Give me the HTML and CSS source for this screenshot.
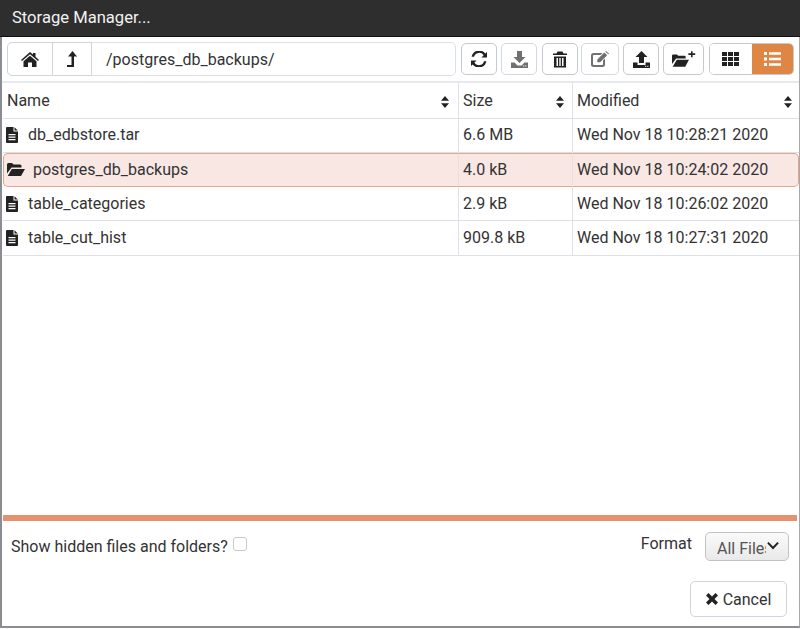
FILE: index.html
```html
<!DOCTYPE html>
<html lang="en">
<head>
    <meta charset="UTF-8">
    <title>Storage Manager</title>
    <link rel="stylesheet" href="styles.css">
</head>
<body>
    <svg class="defs" width="0" height="0">
        <symbol id="file" viewBox="0 0 12 16"><path d="M1 0h6.500v4.500H12V15a1 1 0 0 1-1 1H1a1 1 0 0 1-1-1V1a1 1 0 0 1 1-1zM8.500 0.200 11.800 3.500H8.500zM2.500 7v1.300h7V7zM2.500 9.500v1.300h7V9.500zM2.500 12v1.300h7V12z" fill-rule="evenodd"/></symbol>
        <symbol id="sort" viewBox="0 0 8 12"><path d="M4 0 8 4.700H0zM4 12 0 7.300H8z"/></symbol>
    </svg>

    <div class="dialog">
        <div class="title">Storage Manager...</div>

        <div class="toolbar">
            <div class="path-box">
                <button class="tool home">
                    <svg width="18" height="15" viewBox="0 0 18 15"><path d="M9 0 12 2.600V1h2.500v3.800L18 7.900 17 9 9 2.200 1 9 0 7.900zM9 3.800 15.500 9.300V15H11V10.500H7V15H2.500V9.300z"/></svg>
                </button>
                <button class="tool up">
                    <svg width="10" height="16" viewBox="0 0 10 16"><path d="M5.500 0 10 5.500H7V16H0V14H4.500V5.500H1z"/></svg>
                </button>
                <span class="path-text">/postgres_db_backups/</span>
            </div>

            <button class="tool btn-refresh">
                <svg width="16" height="16" viewBox="0 0 16 16"><path d="M16 1v5.500h-5.500L12.600 4.300A5.300 5.300 0 0 0 3 5.800H.6A7.700 7.700 0 0 1 14.300 2.600zM0 15V9.500h5.500L3.400 11.700A5.300 5.300 0 0 0 13 10.200h2.400A7.700 7.700 0 0 1 1.700 13.400z"/></svg>
            </button>
            <button class="tool btn-download">
                <svg class="muted" width="17" height="17" viewBox="0 0 17 17"><path d="M6 0h5v6h3.500L8.500 12 2.500 6H6zM0 11.500h3.500L6.500 14.500h4L13.500 11.500H17V17H0zM12 14.500h1.200v1H12zM14.200 14.500h1.200v1h-1.200z" fill-rule="evenodd"/></svg>
            </button>
            <button class="tool btn-delete">
                <svg width="14" height="17" viewBox="0 0 14 16"><path d="M4.500 0h5L10.500 2H14V3.500H0V2H3.500zM1 5h12V16H1zM3.500 6.500V14.500H5V6.500zM6.300 6.500V14.500H7.700V6.500zM9 6.500V14.500H10.500V6.500z" fill-rule="evenodd"/></svg>
            </button>
            <button class="tool btn-edit">
                <svg class="muted" width="18" height="16" viewBox="0 0 18 16"><path d="M2.500 2H11.500L9.500 4H2.800A.8.8 0 0 0 2 4.800V13.200A.8.8 0 0 0 2.800 14H11.200A.8.8 0 0 0 12 13.200V9.500L14 7.500V13.500A2.500 2.500 0 0 1 11.500 16H2.500A2.500 2.500 0 0 1 0 13.500V4.500A2.500 2.500 0 0 1 2.500 2zM13.300 1.500 16.200 4.300 9.200 11.300H6.300V8.500zM14.300.5 15 0 18 2.500 17.200 3.300z"/></svg>
            </button>
            <button class="tool btn-upload">
                <svg width="17" height="17" viewBox="0 0 17 17"><path d="M8.500 0 14.500 6H11V12H6V6H2.500zM0 11.500H4.500V14H12.500V11.500H17V17H0zM12 14.800h1.200v1H12zM14.200 14.800h1.200v1h-1.200z" fill-rule="evenodd"/></svg>
            </button>
            <button class="tool btn-folder">
                <svg width="24" height="16" viewBox="0 0 29 19"><path d="M0 5.500A1.500 1.500 0 0 1 1.500 4H6L7.500 5.500H15A1.500 1.500 0 0 1 16.500 7V9H5L0 15.500zM5.800 10.500H20.500L16 19H0.800z"/><path d="M23 0h1.900v2.700H28V4.600H24.900V7.500H23V4.600H19.800V2.700H23z"/></svg>
            </button>

            <div class="view-group">
                <button class="view-btn">
                    <svg width="17" height="14" viewBox="0 0 17 14"><path d="M0 0h5v4H0zM6 0h5v4H6zM12 0h5v4h-5zM0 5h5v4H0zM6 5h5v4H6zM12 5h5v4h-5zM0 10h5v4H0zM6 10h5v4H6zM12 10h5v4h-5z"/></svg>
                </button>
                <button class="view-btn active">
                    <svg width="17" height="14" viewBox="0 0 17 14"><path d="M0 0h3v3H0zM5 .3h12v2.400H5zM0 5.500h3v3H0zM5 5.800h12v2.400H5zM0 11h3v3H0zM5 11.300h12v2.400H5z"/></svg>
                </button>
            </div>
        </div>

        <div class="file-area">
            <table class="files">
                <colgroup>
                    <col class="col-name">
                    <col class="col-size">
                    <col>
                </colgroup>
                <thead>
                    <tr>
                        <th>Name<svg class="sort sort-name"><use href="#sort"/></svg></th>
                        <th>Size<svg class="sort sort-size"><use href="#sort"/></svg></th>
                        <th>Modified<svg class="sort"><use href="#sort"/></svg></th>
                    </tr>
                </thead>
                <tbody>
                    <tr class="raised">
                        <td><svg class="file-icon"><use href="#file"/></svg><span class="fname">db_edbstore.tar</span></td>
                        <td>6.6 MB</td>
                        <td>Wed Nov 18 10:28:21 2020</td>
                    </tr>
                    <tr class="selected raised">
                        <td><svg class="folder-icon" viewBox="0 0 18 13"><path d="M0 1.500A1.500 1.500 0 0 1 1.500 0H5L6.500 1.500H13A1.500 1.500 0 0 1 14.500 3V4.500H4.500L0 10.500zM4.800 6H18L14 13H.8z"/></svg><span class="fname">postgres_db_backups</span></td>
                        <td>4.0 kB</td>
                        <td>Wed Nov 18 10:24:02 2020</td>
                    </tr>
                    <tr>
                        <td><svg class="file-icon"><use href="#file"/></svg><span class="fname">table_categories</span></td>
                        <td>2.9 kB</td>
                        <td>Wed Nov 18 10:26:02 2020</td>
                    </tr>
                    <tr class="last-row">
                        <td><svg class="file-icon"><use href="#file"/></svg><span class="fname">table_cut_hist</span></td>
                        <td>909.8 kB</td>
                        <td>Wed Nov 18 10:27:31 2020</td>
                    </tr>
                </tbody>
            </table>
        </div>

        <div class="splitter"></div>

        <div class="options">
            <div class="hidden-opt">Show hidden files and folders?<span class="check"></span></div>
            <div class="format">
                <span class="format-label">Format</span>
                <div class="select"><span class="select-text">All Files</span>
                    <svg class="chevron" width="12" height="8" viewBox="0 0 13 9"><path d="M1.500 0 6.500 5 11.500 0 13 1.500 6.500 8.500 0 1.500z"/></svg>
                </div>
            </div>
        </div>

        <div class="footer">
            <button class="cancel">
                <svg width="12" height="12" viewBox="0 0 12 12"><path d="M2.500 0 6 3.500 9.500 0 12 2.500 8.500 6 12 9.500 9.500 12 6 8.500 2.500 12 0 9.500 3.500 6 0 2.500z"/></svg>Cancel
            </button>
        </div>
    </div>
</body>
</html>
```

FILE: styles.css
```css
* {
    box-sizing: border-box;
}
html, body {
    margin: 0;
    height: 100%;
    background-color: #fff;
}
body {
    font-family: Roboto, 'Liberation Sans', sans-serif;
    font-size: 16px;
    color: #333;
    overflow: hidden;
}
.defs {
    position: absolute;
}
svg {
    fill: #222;
    display: block;
}
button {
    font-family: inherit;
    font-size: inherit;
    color: inherit;
    margin: 0;
    padding: 0;
}
.dialog {
    height: 628px;
    display: flex;
    flex-direction: column;
    border-left: 2px solid #8a8d92;
    border-bottom: 2px solid #8a8d92;
    border-right: 1px solid #a5a8ad;
}
.title {
    height: 37px;
    margin-left: -2px;
    margin-right: -1px;
    padding: 0 12px;
    background-color: #2f2e2e;
    border-bottom: 1px solid #111;
    color: #f2f2f2;
    font-size: 16.6px;
    line-height: 36px;
}
.toolbar {
    height: 46px;
    padding: 5px 5px 0 5px;
    display: flex;
    align-items: flex-start;
    border-bottom: 2px solid #e6e9ef;
}
.path-box {
    width: 449px;
    height: 34px;
    display: flex;
    align-items: center;
    border: 1px solid #dde0e7;
    border-radius: 5px;
    margin-right: 5px;
}
.tool {
    height: 32px;
    display: flex;
    align-items: center;
    justify-content: center;
    background-color: #fff;
    border: 1px solid #c5c9d1;
    border-radius: 5px;
    margin-top: 1px;
    margin-right: 4px;
    flex: none;
}
.path-box .tool {
    height: 34px;
    margin: -1px 0;
    border-color: #d0d4db;
}
.tool.home {
    width: 46px;
    margin-left: -1px;
    border-radius: 5px 0 0 5px;
}
.tool.up {
    width: 40px;
    margin-left: -1px;
    border-radius: 0;
}
.path-text {
    margin-left: 14px;
}
.btn-refresh, .btn-download, .btn-delete, .btn-upload {
    width: 36px;
}
.btn-download {
    margin-right: 5px;
}
.btn-delete {
    margin-right: 3px;
}
.btn-edit {
    width: 38px;
}
.btn-folder {
    width: 41px;
    margin-right: 5px;
}
.btn-download, .btn-edit {
    border-color: #d5d8de;
}
svg.muted {
    fill: #707070;
}
.view-group {
    margin-top: 1px;
    display: flex;
    height: 32px;
    width: 85px;
    border: 1px solid #c5c9d1;
    border-radius: 5px;
    overflow: hidden;
}
.view-btn {
    flex: 1;
    display: flex;
    align-items: center;
    justify-content: center;
    border: none;
    background-color: #fff;
}
.view-btn.active {
    background-color: #e08645;
}
.view-btn.active svg {
    fill: #fff;
}
.file-area {
    flex: 1;
    margin-left: 1px;
}
.files {
    width: 100%;
    table-layout: fixed;
    border-collapse: separate;
    border-spacing: 0;
}
.col-name {
    width: 455px;
}
.col-size {
    width: 114px;
}
.files th, .files td {
    height: 34px;
    padding: 0 4px;
    font-weight: 400;
    text-align: left;
    border-bottom: 1px solid #dde0e7;
    border-left: 1px solid #dde0e7;
    white-space: nowrap;
}
.files th:first-child, .files td:first-child {
    border-left: none;
}
.files th {
    height: 36px;
    position: relative;
    padding-bottom: 1px;
}
.files td:first-child {
    display: flex;
    align-items: center;
}
.files .raised td {
    padding-bottom: 2px;
}
.last-row td {
    height: 35px;
    padding-bottom: 1px;
}
.sort {
    position: absolute;
    right: 7px;
    top: 13px;
    width: 8px;
    height: 12px;
    fill: #222;
}
.sort-name {
    right: 9px;
}
.sort-size {
    right: 8px;
}
.file-icon {
    width: 12px;
    height: 16px;
    margin-left: -1px;
    margin-right: 10px;
    flex: none;
}
.folder-icon {
    width: 18px;
    height: 13px;
    margin-left: -1px;
    margin-right: 8px;
    flex: none;
}
.selected td {
    background-color: #f8e7e3;
    border-top: 1px solid #e8a488;
    border-bottom: 1px solid #e8a488;
    border-left-color: #eadfe0;
}
.selected td:first-child {
    border-left: 1px solid #e8a488;
    border-radius: 5px 0 0 5px;
}
.selected td:last-child {
    border-right: 1px solid #e8a488;
    border-radius: 0 5px 5px 0;
}
.splitter {
    height: 6px;
    margin-left: 1px;
    margin-right: 2px;
    background-color: #e6916f;
    flex: none;
}
.options {
    height: 59px;
    padding: 11px 10px 0 7px;
    display: flex;
    justify-content: space-between;
    align-items: flex-start;
}
.hidden-opt {
    display: flex;
    align-items: flex-start;
    line-height: 30px;
    height: 30px;
    margin-left: 2px;
}
.check {
    width: 14px;
    height: 14px;
    border: 1px solid #c8c8c8;
    border-radius: 3px;
    margin: 5px 0 0 5px;
}
.format {
    display: flex;
    align-items: flex-start;
}
.format-label {
    margin-right: 13px;
    line-height: 24px;
}
.select {
    width: 84px;
    height: 29px;
    padding-left: 11px;
    position: relative;
    line-height: 32px;
    white-space: nowrap;
    color: #555;
    background: linear-gradient(#fafafa, #e9e9e9);
    border: 1px solid #c2c2c2;
    border-radius: 5px;
}
.select-text {
    display: block;
    width: 49px;
    overflow: hidden;
}
.chevron {
    position: absolute;
    right: 9px;
    top: 9px;
}
.footer {
    height: 46px;
    padding: 1px 12px 0 0;
    display: flex;
    justify-content: flex-end;
    align-items: flex-start;
}
.cancel {
    width: 97px;
    height: 36px;
    display: flex;
    align-items: center;
    justify-content: center;
    gap: 5px;
    background-color: #fff;
    border: 1px solid #cfd4e0;
    border-radius: 5px;
}
```
